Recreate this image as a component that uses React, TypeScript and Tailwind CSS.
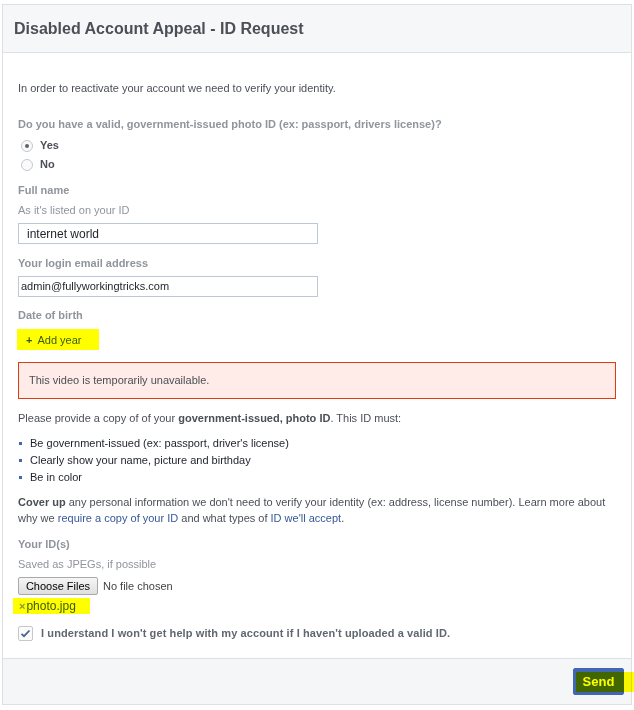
import { ReactNode } from 'react';

const font = { fontFamily: '"Liberation Sans", Arial, sans-serif' };

function Label({ children, className = '' }: { children: ReactNode; className?: string }) {
  return <div className={`h-4 leading-4 text-[11px] font-bold text-[#90949c] ${className}`}>{children}</div>;
}

function Hint({ children, className = '' }: { children: ReactNode; className?: string }) {
  return <div className={`h-4 leading-4 text-[11px] text-[#90949c] ${className}`}>{children}</div>;
}

function Radio({ label, checked }: { label: string; checked?: boolean }) {
  return (
    <div className="flex h-[19px] items-center">
      <span className="ml-[3px] flex h-3 w-3 items-center justify-center rounded-full border border-[#c4c8ce] bg-[#fafafa]">
        {checked && <span className="h-[4px] w-[4px] rounded-full bg-[#5d626b]" />}
      </span>
      <span className="ml-[7px] text-[11px] font-bold text-[#4b4f56]">{label}</span>
    </div>
  );
}

function Bullet({ children }: { children: ReactNode }) {
  return (
    <li className="flex h-[17px] items-center text-[11px] text-[#1d2129]">
      <span className="ml-px mr-[8px] h-[3px] w-[3px] bg-[#4267b2]" />
      {children}
    </li>
  );
}

export default function App() {
  return (
    <div className="h-[710px] bg-white pt-[4px] pl-[2px]" style={font}>
      <div className="w-[630px] border border-[#dddfe2]">
        <div className="flex h-[48px] items-center border-b border-[#dddfe2] bg-[#f6f7f9] pl-[11px]">
          <h1 className="text-[16px] font-bold text-[#4b4f56]">Disabled Account Appeal - ID Request</h1>
        </div>

        <div className="px-[15px] pt-[27px] pb-[17px]">
          <div className="h-4 leading-4 text-[11px] text-[#4b4f56]">
            In order to reactivate your account we need to verify your identity.
          </div>

          <Label className="mt-[20px]">
            Do you have a valid, government-issued photo ID (ex: passport, drivers license)?
          </Label>
          <div className="mt-[4px]">
            <Radio label="Yes" checked />
            <Radio label="No" />
          </div>

          <Label className="mt-[8px]">Full name</Label>
          <Hint className="mt-[4px]">As it&apos;s listed on your ID</Hint>
          <div className="mt-[5px] flex h-[21px] w-[300px] items-center border border-[#bdc7d8] pl-[8px] text-[12px] text-[#1d2129]">
            internet world
          </div>

          <Label className="mt-[11px]">Your login email address</Label>
          <div className="mt-[5px] flex h-[21px] w-[300px] items-center border border-[#bdc7d8] pl-[2px] text-[11px] text-[#1d2129]">
            admin@fullyworkingtricks.com
          </div>

          <Label className="mt-[10px]">Date of birth</Label>
          <div className="mt-[6px] ml-[-1px] flex h-[21px] w-[82px] items-center bg-[#ffff00] pl-[9px] pt-px text-[11px] text-[#3b5a0e]">
            <span className="mr-[5px] text-[11px] font-bold">+</span>
            Add year
          </div>

          <div className="mt-[12px] flex h-[37px] w-[598px] items-center border border-[#dd3c10] bg-[#ffebe8] pl-[10px] text-[11px] text-[#4b4f56]">
            This video is temporarily unavailable.
          </div>

          <div className="mt-[11px] h-4 leading-4 text-[11px] text-[#4b4f56]">
            Please provide a copy of of your <b>government-issued, photo ID</b>. This ID must:
          </div>

          <ul className="mt-[9px]">
            <Bullet>Be government-issued (ex: passport, driver&apos;s license)</Bullet>
            <Bullet>Clearly show your name, picture and birthday</Bullet>
            <Bullet>Be in color</Bullet>
          </ul>

          <p className="mt-[8px] text-[11px] leading-4 text-[#4b4f56]">
            <b>Cover up</b> any personal information we don&apos;t need to verify your identity (ex: address, license number). Learn more about why we{' '}
            <span className="text-[#365899]">require a copy of your ID</span> and what types of{' '}
            <span className="text-[#365899]">ID we&apos;ll accept</span>.
          </p>

          <Label className="mt-[10px]">Your ID(s)</Label>
          <Hint className="mt-[4px]">Saved as JPEGs, if possible</Hint>
          <div className="mt-[5px] flex items-center">
            <span className="flex h-[18px] w-[80px] items-center justify-center rounded-[2px] border border-[#a9a9a9] bg-gradient-to-b from-[#f6f6f6] to-[#dedede] text-[11px] text-black">
              Choose Files
            </span>
            <span className="ml-[5px] text-[11px] text-[#444]">No file chosen</span>
          </div>
          <div className="mt-[3px] ml-[-5px] flex h-[16px] w-[77px] items-center bg-[#ffff00] pl-[6px] text-[12px] text-[#3b5a0e]">
            <span className="mr-[1px] text-[11px] font-bold text-[#8a9a30]">×</span>
            photo.jpg
          </div>

          <div className="mt-[11px] flex h-[16px] items-center">
            <span className="flex h-[15px] w-[15px] items-center justify-center rounded-[2px] border border-[#c4c8ce] bg-[#fbfbfb]">
              <svg width="11" height="9" viewBox="0 0 11 9">
                <path d="M1.5 4.8 L4 7.2 L9.5 1.5" fill="none" stroke="#4b6093" strokeWidth="1.8" />
              </svg>
            </span>
            <span className="ml-[8px] text-[11px] font-bold tracking-[0.1px] text-[#606770]">
              I understand I won&apos;t get help with my account if I haven&apos;t uploaded a valid ID.
            </span>
          </div>
        </div>

        <div className="relative flex h-[46px] items-center justify-end border-t border-[#dddfe2] bg-[#f5f6f7] pr-[7px]">
          <button className="h-[27px] w-[51px] rounded-[2px] border border-[#4267b2] bg-[#4267b2] text-[13px] font-bold text-white">
            Send
          </button>
          <span className="absolute right-[-3px] top-[13px] h-[20px] w-[58px] bg-[#ffff00] mix-blend-multiply" />
        </div>
      </div>
    </div>
  );
}
